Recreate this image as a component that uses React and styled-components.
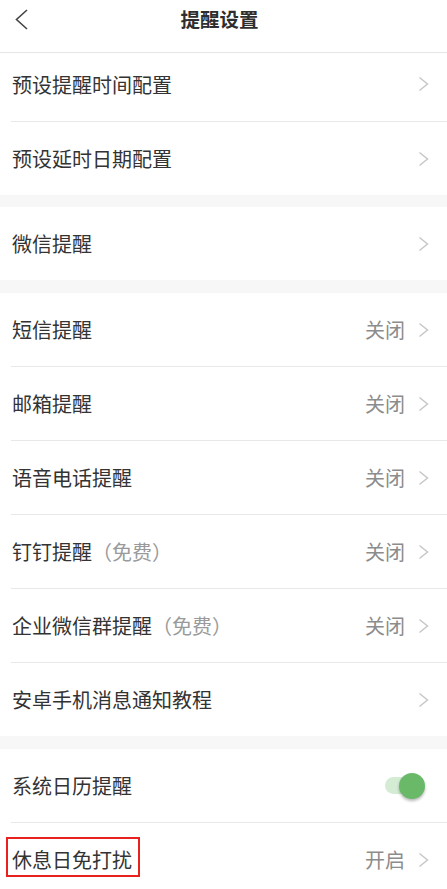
import React from "react";
import styled, { createGlobalStyle } from "styled-components";

const Global = createGlobalStyle`
  html, body { margin: 0; padding: 0; background: #ffffff; }
  body { font-family: "Noto Sans CJK SC", "Noto Sans", sans-serif; -webkit-font-smoothing: antialiased; }
  * { box-sizing: border-box; }
`;

const Page = styled.div`
  width: 447px;
  min-height: 889px;
  background: #f7f7f7;
  overflow: hidden;
`;

const Header = styled.div`
  height: 53px;
  background: #fff;
  border-bottom: 1px solid #e6e6e6;
  display: grid;
  grid-template-columns: 52px 1fr 60px;
  align-items: start;
  padding-top: 5px;
`;

const BackBtn = styled.div`
  display: flex;
  align-items: center;
  padding-left: 15px;
  height: 28px;
`;

const Title = styled.div`
  text-align: center;
  font-size: 19.5px;
  font-weight: 700;
  color: #2e2e2e;
  line-height: 28px;
`;

const Group = styled.div`
  background: #fff;
  margin-bottom: ${(p) => p.$gap}px;
`;

const Row = styled.div`
  height: ${(p) => p.$h || 73}px;
  padding: 0 18px ${(p) => p.$pb || 0}px 12px;
  display: flex;
  align-items: center;
  position: relative;
  & + & {
    border-top: 1px solid #e8e8e8;
    margin-left: 11px;
    padding-left: 1px;
    height: ${(p) => (p.$h || 73) + 1}px;
  }
`;

const Label = styled.span`
  flex: 1;
  font-size: 20px;
  color: #333;
  line-height: 29px;
`;

const Boxed = styled.span`
  position: relative;
  &::after {
    content: "";
    position: absolute;
    left: -6px;
    right: -8px;
    top: -8px;
    bottom: -3px;
    border: 2px solid #e8201e;
    pointer-events: none;
  }
`;

const Note = styled.span`
  color: #9a9a9a;
`;

const Value = styled.span`
  font-size: 20px;
  color: #8c8c8c;
  margin-right: 13px;
`;

const Track = styled.div`
  position: relative;
  width: 36px;
  height: 17px;
  border-radius: 9px;
  background: #d4ebd4;
  margin-right: 8px;
`;

const Knob = styled.div`
  position: absolute;
  width: 26px;
  height: 26px;
  border-radius: 50%;
  background: #69b969;
  right: -4px;
  top: -4.5px;
  box-shadow: 0 2px 3px rgba(0, 0, 0, 0.28);
`;

const Chevron = () => (
  <svg width="11" height="16" viewBox="0 0 11 16">
    <polyline points="1.5,1.5 9.5,8 1.5,14.5" fill="none" stroke="#c7c7c7" strokeWidth="1.5" />
  </svg>
);

const groups = [
  {
    gap: 12,
    rows: [
      { label: "预设提醒时间配置", h: 68, pb: 6 },
      { label: "预设延时日期配置" },
    ],
  },
  { gap: 13, rows: [{ label: "微信提醒" }] },
  {
    gap: 13,
    rows: [
      { label: "短信提醒", value: "关闭" },
      { label: "邮箱提醒", value: "关闭" },
      { label: "语音电话提醒", value: "关闭" },
      { label: "钉钉提醒", note: "（免费）", value: "关闭" },
      { label: "企业微信群提醒", note: "（免费）", value: "关闭" },
      { label: "安卓手机消息通知教程" },
    ],
  },
  {
    gap: 0,
    rows: [
      { label: "系统日历提醒", toggle: true },
      { label: "休息日免打扰", value: "开启", boxed: true },
    ],
  },
];

export default function App() {
  return (
    <Page>
      <Global />
      <Header>
        <BackBtn>
          <svg width="14" height="22" viewBox="0 0 14 22">
            <polyline points="12,2 1.5,11.5 12,21" fill="none" stroke="#444" strokeWidth="1.6" />
          </svg>
        </BackBtn>
        <Title>提醒设置</Title>
        <div />
      </Header>
      {groups.map((g, gi) => (
        <Group key={gi} $gap={g.gap}>
          {g.rows.map((r, ri) => (
            <Row key={ri} $h={r.h} $pb={r.pb}>
              <Label>
                {r.boxed ? <Boxed>{r.label}</Boxed> : r.label}
                {r.note && <Note>{r.note}</Note>}
              </Label>
              {r.value && <Value>{r.value}</Value>}
              {r.toggle ? (
                <Track>
                  <Knob />
                </Track>
              ) : (
                <Chevron />
              )}
            </Row>
          ))}
        </Group>
      ))}
    </Page>
  );
}
